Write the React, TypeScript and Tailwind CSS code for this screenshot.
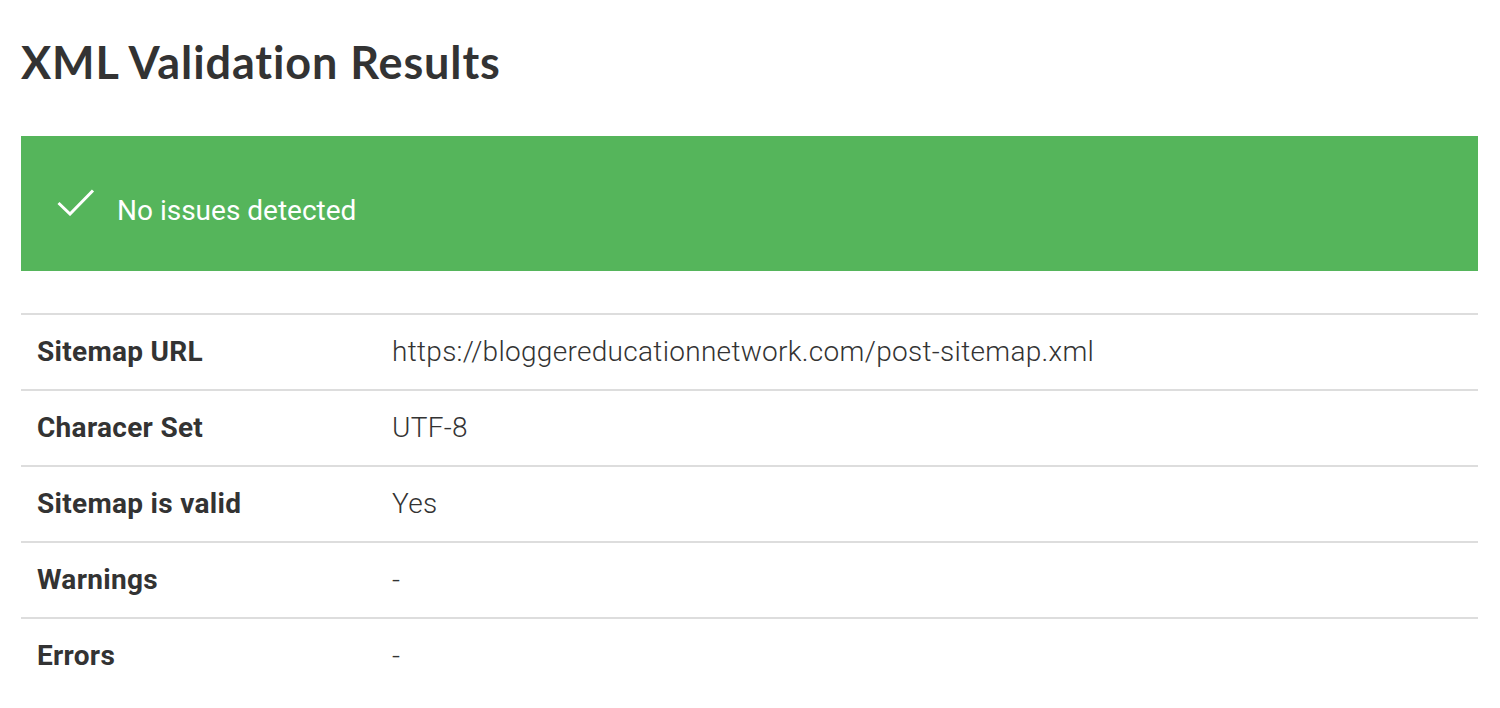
const ROWS: { label: string; value: string }[] = [
  { label: "Sitemap URL", value: "https://bloggereducationnetwork.com/post-sitemap.xml" },
  { label: "Characer Set", value: "UTF-8" },
  { label: "Sitemap is valid", value: "Yes" },
  { label: "Warnings", value: "-" },
  { label: "Errors", value: "-" },
];

export default function App() {
  return (
    <div className="min-h-screen bg-white pl-[21px] pr-[22px] font-['Roboto',sans-serif] text-[#333333]">
      <h1 className="pt-[35px] text-[45px] leading-[1.2] tracking-[0.9px] font-bold font-['Lato',sans-serif] text-[#333333]">
        XML Validation Results
      </h1>

      {/* status banner */}
      <div className="mt-[47px] h-[135px] bg-[#55b55b] pt-[52px] pl-[36px] flex items-start text-white">
        <svg width="38" height="28" viewBox="0 0 38 28" fill="none" className="shrink-0">
          <polyline points="1.5,15 13,26 36,2.5" stroke="white" strokeWidth="3" />
        </svg>
        <span className="ml-[22px] mt-[7px] text-[28px] leading-[1.172] font-normal">No issues detected</span>
      </div>

      {/* details table */}
      <div className="mt-[42px]">
        {ROWS.map((r) => (
          <div key={r.label} className="flex h-[76px] border-t-2 border-[#dddddd] pt-[21px] text-[28px] leading-[1.172] tracking-[0.3px]">
            <div className="w-[371px] pl-[16px] font-bold">{r.label}</div>
            <div className="font-light text-[#333333]">{r.value}</div>
          </div>
        ))}
      </div>
    </div>
  );
}
